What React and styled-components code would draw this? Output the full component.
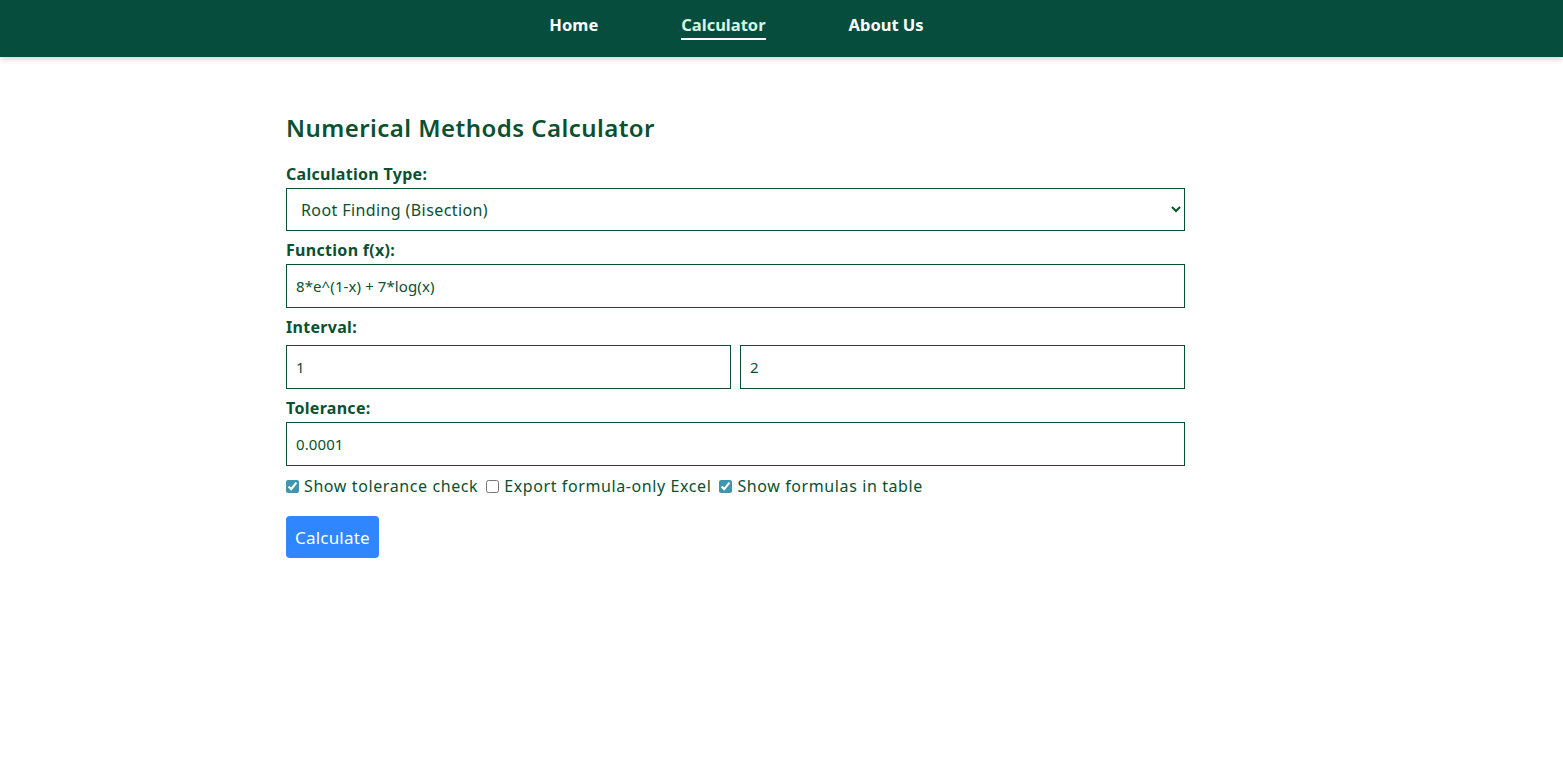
import React, { useState } from "react";
import styled, { createGlobalStyle } from "styled-components";

const GlobalStyle = createGlobalStyle`
  body {
    margin: 0;
    background: #ffffff;
    font-family: "Noto Sans", "Open Sans", sans-serif;
    color: #0b5031;
  }
  * { box-sizing: border-box; }
`;

const NavBar = styled.nav`
  height: 57px;
  background: #064d3e;
  box-shadow: 0 2px 6px rgba(0, 0, 0, 0.18);
  display: flex;
  justify-content: center;
  align-items: center;
  padding-right: 90px;
`;

const NavList = styled.ul`
  display: flex;
  gap: 83px;
  list-style: none;
  margin: 0;
  padding: 0;
`;

const NavLink = styled.a`
  display: block;
  font-size: 16.5px;
  font-weight: 700;
  line-height: 20px;
  color: ${(p) => (p.$active ? "#d4f5e3" : "#ffffff")};
  text-decoration: none;
  padding: 0 0 3px;
  border-bottom: 2px solid ${(p) => (p.$active ? "#ffffff" : "transparent")};
  margin-bottom: 2px;
`;

const Main = styled.main`
  max-width: 991px;
  margin: 0 auto;
  padding-top: 54px;
`;

const Form = styled.form`
  width: 899px;
`;

const Title = styled.h2`
  margin: 0 0 19px;
  font-size: 24px;
  font-weight: 600;
  line-height: 34px;
  letter-spacing: 0.45px;
  color: #0b5031;
`;

const Field = styled.div`
  margin-bottom: 9px;
`;

const Label = styled.label`
  display: block;
  font-size: 16px;
  font-weight: 700;
  line-height: 20px;
  letter-spacing: 0.3px;
  margin-bottom: 4px;
  color: #0b5031;
`;

const inputStyles = `
  width: 100%;
  border: 1px solid #0b5031;
  border-radius: 0;
  background: #fff;
  font-family: "Noto Sans", "Open Sans", sans-serif;
  color: #0b5031;
  outline: none;
`;

const Select = styled.select`
  ${inputStyles}
  height: 43px;
  padding: 0 10px;
  font-size: 16px;
  letter-spacing: 0.4px;
`;

const Input = styled.input`
  ${inputStyles}
  height: 44px;
  padding: 0 9px;
  font-size: 15px;
  letter-spacing: 0.1px;
`;

const Pair = styled.div`
  display: grid;
  grid-template-columns: 1fr 1fr;
  gap: 9px;
  margin-top: 8px;
`;

const Options = styled.div`
  display: flex;
  align-items: center;
  gap: 8px;
  margin-top: 6px;
`;

const Check = styled.label`
  display: flex;
  align-items: center;
  gap: 5px;
  font-size: 16px;
  letter-spacing: 0.6px;
  line-height: 22px;
  color: #0b5031;

  input {
    margin: 0;
    width: 13px;
    height: 13px;
    accent-color: #3f96ad;
  }
`;

const Button = styled.button`
  margin-top: 19px;
  height: 42px;
  padding: 0 9px;
  border: none;
  border-radius: 4px;
  background: #2f86ff;
  color: #ffffff;
  font-family: "Noto Sans", "Open Sans", sans-serif;
  font-size: 17px;
  letter-spacing: 0.2px;
  cursor: pointer;
`;

export default function App() {
  const [fn, setFn] = useState("8*e^(1-x) + 7*log(x)");
  const [a, setA] = useState("1");
  const [b, setB] = useState("2");
  const [tol, setTol] = useState("0.0001");
  const [showTol, setShowTol] = useState(true);
  const [exportOnly, setExportOnly] = useState(false);
  const [showFormulas, setShowFormulas] = useState(true);

  return (
    <>
      <GlobalStyle />
      <NavBar>
        <NavList>
          <li><NavLink href="#">Home</NavLink></li>
          <li><NavLink href="#" $active>Calculator</NavLink></li>
          <li><NavLink href="#">About Us</NavLink></li>
        </NavList>
      </NavBar>
      <Main>
        <Form onSubmit={(e) => e.preventDefault()}>
          <Title>Numerical Methods Calculator</Title>
          <Field>
            <Label>Calculation Type:</Label>
            <Select defaultValue="bisection">
              <option value="bisection">Root Finding (Bisection)</option>
              <option value="newton">Root Finding (Newton-Raphson)</option>
              <option value="secant">Root Finding (Secant)</option>
            </Select>
          </Field>
          <Field>
            <Label>Function f(x):</Label>
            <Input value={fn} onChange={(e) => setFn(e.target.value)} />
          </Field>
          <Field>
            <Label>Interval:</Label>
            <Pair>
              <Input value={a} onChange={(e) => setA(e.target.value)} />
              <Input value={b} onChange={(e) => setB(e.target.value)} />
            </Pair>
          </Field>
          <Field>
            <Label>Tolerance:</Label>
            <Input value={tol} onChange={(e) => setTol(e.target.value)} />
          </Field>
          <Options>
            <Check>
              <input type="checkbox" checked={showTol} onChange={() => setShowTol(!showTol)} />
              Show tolerance check
            </Check>
            <Check>
              <input type="checkbox" checked={exportOnly} onChange={() => setExportOnly(!exportOnly)} />
              Export formula-only Excel
            </Check>
            <Check>
              <input type="checkbox" checked={showFormulas} onChange={() => setShowFormulas(!showFormulas)} />
              Show formulas in table
            </Check>
          </Options>
          <Button type="submit">Calculate</Button>
        </Form>
      </Main>
    </>
  );
}
